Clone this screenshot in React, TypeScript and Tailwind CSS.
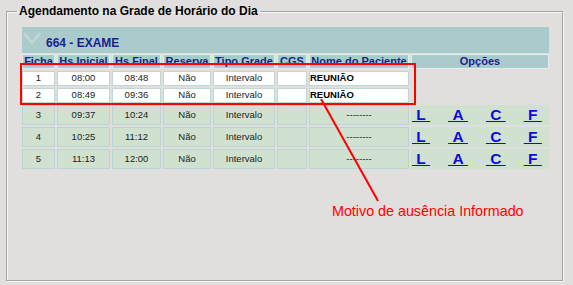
import React from "react";

type Row = {
  ficha: string;
  inicio: string;
  fim: string;
  paciente?: string;
};

const ROWS: Row[] = [
  { ficha: "1", inicio: "08:00", fim: "08:48", paciente: "REUNIÃO" },
  { ficha: "2", inicio: "08:49", fim: "09:36", paciente: "REUNIÃO" },
  { ficha: "3", inicio: "09:37", fim: "10:24" },
  { ficha: "4", inicio: "10:25", fim: "11:12" },
  { ficha: "5", inicio: "11:13", fim: "12:00" },
];

const HEADERS = [
  "Ficha",
  "Hs Inicial",
  "Hs Final",
  "Reserva",
  "Tipo Grade",
  "CGS",
  "Nome do Paciente",
  "Opções",
];

function Cell({
  free,
  className = "",
  children,
}: {
  free: boolean;
  className?: string;
  children?: React.ReactNode;
}) {
  return (
    <div
      className={`flex items-center overflow-hidden border text-[9.5px] text-[#222] ${
        free ? "border-[#b9d4d2] bg-[#d0e2cf]" : "border-[#c2d6d6] bg-white"
      } ${className}`}
    >
      {children}
    </div>
  );
}

export default function App() {
  return (
    <div className="relative h-[285px] w-[573px] overflow-hidden bg-[#e0dfdd] pl-[6px] pt-[4px] font-['Liberation_Sans',Arial,sans-serif]">
      <fieldset className="h-[277px] w-[557px] border border-[#a4a4a4] pl-[15px] pt-[9px] shadow-[1px_1px_0_#f6f6f6,inset_1px_1px_0_#f6f6f6]">
        <legend className="ml-[-5px] px-[2px] text-[12px] leading-[14px] font-bold text-black">
          Agendamento na Grade de Horário do Dia
        </legend>

        <div className="w-[527px]">
          <div className="flex h-[26px] items-end bg-[#a9cbcb] pb-[3px]">
            <svg
              width="24"
              height="20"
              viewBox="0 0 24 20"
              className="mb-[-1px] self-start mt-[5px]"
            >
              <polyline
                points="2,1 10,11 18,1"
                fill="none"
                stroke="#c5d6d6"
                strokeWidth="2.5"
              />
            </svg>
            <span className="text-[12px] leading-[14px] font-bold text-[#1d1d8f]">
              664 - EXAME
            </span>
          </div>

          <div className="mt-[1px] grid grid-cols-[33px_53px_49px_48px_62px_30px_100px_138px] grid-rows-[15px_15px_15px_20px_20px_20px] gap-[2px]">
            {HEADERS.map((h) => (
              <div
                key={h}
                className="flex items-center justify-center border border-[#e2eeee] bg-[#a9cbcb] text-[11px] leading-[13px] font-bold text-[#1d1d8f]"
              >
                {h}
              </div>
            ))}

            {ROWS.map((r) => {
              const free = !r.paciente;
              return (
                <React.Fragment key={r.ficha}>
                  <Cell free={free} className="justify-center">
                    {r.ficha}
                  </Cell>
                  <Cell free={free} className="justify-center">
                    {r.inicio}
                  </Cell>
                  <Cell free={free} className="justify-center">
                    {r.fim}
                  </Cell>
                  <Cell free={free} className="justify-center">
                    Não
                  </Cell>
                  <Cell free={free} className="justify-center">
                    Intervalo
                  </Cell>
                  <Cell free={free} />
                  {free ? (
                    <Cell free className="justify-center">
                      --------
                    </Cell>
                  ) : (
                    <Cell free={false} className="font-bold text-black">
                      {r.paciente}
                    </Cell>
                  )}
                  {free ? (
                    <div className="flex items-start gap-[18px] bg-[#d0e2cf] pl-[1px] text-[15.5px] leading-[19px] font-bold">
                      {["L", "A", "C", "F"].map((l) => (
                        <a
                          key={l}
                          href="#"
                          className="text-[#0b0be3] underline"
                        >
                          {"\u00a0" + l + "\u00a0"}
                        </a>
                      ))}
                    </div>
                  ) : (
                    <div />
                  )}
                </React.Fragment>
              );
            })}
          </div>
        </div>
      </fieldset>

      {/* annotation overlay */}
      <div className="absolute left-[20px] top-[63px] h-[42px] w-[396px] border-2 border-[#ff0000]" />
      <svg
        className="pointer-events-none absolute left-0 top-0"
        width="573"
        height="285"
      >
        <line x1="321" y1="99" x2="378" y2="201" stroke="#ff0000" strokeWidth="2" />
      </svg>
      <div className="absolute left-[332px] top-[203px] text-[14.3px] leading-[16px] text-[#ff0000]">
        Motivo de ausência Informado
      </div>
    </div>
  );
}
